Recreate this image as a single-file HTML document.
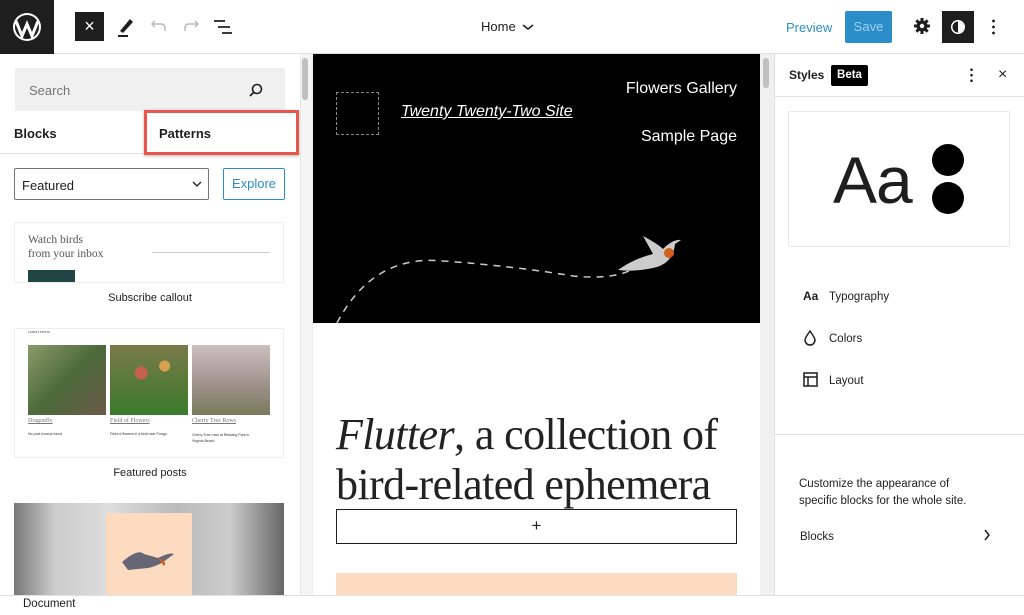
<!DOCTYPE html>
<html><head><meta charset="utf-8"><style>
*{box-sizing:border-box;margin:0;padding:0}
body{width:1024px;height:615px;overflow:hidden;background:#fff;font-family:"Liberation Sans",sans-serif;color:#1e1e1e;position:relative}
.abs{position:absolute}
</style></head><body>
<!-- top bar -->
<div class="abs" style="left:0;top:0;width:1024px;height:54px;border-bottom:1px solid #e0e0e0;background:#fff"></div>
<div class="abs" style="left:0;top:0;width:54px;height:54px;background:#1e1e1e">
<svg width="54" height="54" viewBox="0 0 54 54"><circle cx="27" cy="27" r="14" fill="#fff"/><circle cx="27" cy="27" r="12" fill="#1e1e1e"/><path d="M16 21 L22 36 L27 24 L32 36 L38 21" stroke="#fff" stroke-width="3" fill="none"/></svg></div>
<div class="abs" style="left:75px;top:12px;width:29px;height:29px;background:#1e1e1e;color:#fff;font-size:18px;text-align:center;line-height:28px">×</div>
<svg class="abs" style="left:116px;top:16px" width="20" height="22"><path d="M4 15 L14 3 L17 6 L7 17 Z" fill="#1e1e1e"/><rect x="2" y="19" width="10" height="2" fill="#1e1e1e"/></svg>
<svg class="abs" style="left:150px;top:18px" width="18" height="16"><path d="M5 3 L2 6 L5 9 M2 6 H11 Q15 6 15 10 V13" stroke="#bbb" stroke-width="1.5" fill="none"/></svg>
<svg class="abs" style="left:182px;top:18px" width="18" height="16"><path d="M13 3 L16 6 L13 9 M16 6 H7 Q3 6 3 10 V13" stroke="#bbb" stroke-width="1.5" fill="none"/></svg>
<svg class="abs" style="left:213px;top:18px" width="20" height="18"><path d="M1 3 H12 M5 9 H17 M9 15 H19" stroke="#1e1e1e" stroke-width="1.8"/></svg>
<div class="abs" style="left:481px;top:19px;font-size:13px">Home</div>
<svg class="abs" style="left:522px;top:23px" width="12" height="8"><path d="M1 2 L6 6 L11 2" stroke="#1e1e1e" stroke-width="1.5" fill="none"/></svg>
<div class="abs" style="left:786px;top:20px;font-size:13px;color:#2c8ec8">Preview</div>
<div class="abs" style="left:845px;top:11px;width:47px;height:32px;background:#2c8ec8;color:#9fd0ee;font-size:13px;text-align:center;line-height:32px;border-radius:2px">Save</div>
<svg class="abs" style="left:912px;top:16px" width="20" height="20" viewBox="0 0 20 20"><g fill="#1e1e1e"><rect x="8.5" y="2" width="3" height="16"/><rect x="8.5" y="2" width="3" height="16" transform="rotate(45 10 10)"/><rect x="8.5" y="2" width="3" height="16" transform="rotate(90 10 10)"/><rect x="8.5" y="2" width="3" height="16" transform="rotate(135 10 10)"/><circle cx="10" cy="10" r="5.5"/></g><circle cx="10" cy="10" r="2.2" fill="#fff"/></svg>
<div class="abs" style="left:942px;top:11px;width:32px;height:32px;background:#1e1e1e"><svg width="32" height="32"><circle cx="16" cy="16" r="7" fill="#fff"/><circle cx="16" cy="16" r="5.5" fill="#1e1e1e"/><path d="M16 10.5 A5.5 5.5 0 0 1 16 21.5 Z" fill="#fff"/></svg></div>
<div class="abs" style="left:992px;top:18px;width:3px;height:18px;background:radial-gradient(circle,#1e1e1e 1.3px,transparent 1.5px) 0 0/3px 6px"></div>

<!-- left panel -->
<div class="abs" style="left:15px;top:68px;width:270px;height:43px;background:#f0f0f0"></div>
<div class="abs" style="left:29px;top:83px;font-size:13px;color:#757575">Search</div>
<svg class="abs" style="left:248px;top:82px" width="16" height="16"><circle cx="9" cy="7" r="4.5" stroke="#1e1e1e" stroke-width="1.6" fill="none"/><path d="M6 10 L2 14" stroke="#1e1e1e" stroke-width="1.8"/></svg>
<div class="abs" style="left:0;top:153px;width:300px;height:1px;background:#e0e0e0"></div>
<div class="abs" style="left:14px;top:126px;font-size:13px;font-weight:bold">Blocks</div>
<div class="abs" style="left:144px;top:110px;width:155px;height:45px;border:3px solid #e8574c;box-shadow:0 1px 3px rgba(0,0,0,.3)"></div>
<div class="abs" style="left:159px;top:126px;font-size:13px;font-weight:bold">Patterns</div>
<div class="abs" style="left:14px;top:168px;width:195px;height:32px;border:1px solid #757575;border-radius:2px"></div>
<div class="abs" style="left:22px;top:178px;font-size:13px">Featured</div>
<svg class="abs" style="left:192px;top:181px" width="10" height="7"><path d="M1 1 L5 5 L9 1" stroke="#1e1e1e" stroke-width="1.3" fill="none"/></svg>
<div class="abs" style="left:223px;top:168px;width:62px;height:32px;border:1px solid #2c8ec8;border-radius:2px;color:#2c8ec8;font-size:13px;text-align:center;line-height:30px">Explore</div>
<div class="abs" style="left:14px;top:222px;width:270px;height:61px;border:1px solid #eee"></div>
<div class="abs" style="left:28px;top:233px;font-family:'Liberation Serif',serif;font-size:11.5px;color:#555;line-height:14px">Watch birds<br>from your inbox</div>
<div class="abs" style="left:152px;top:252px;width:118px;height:1px;background:#ccc"></div>
<div class="abs" style="left:28px;top:270px;width:47px;height:12px;background:#204543"></div>
<div class="abs" style="left:0;top:292px;width:300px;text-align:center;font-size:11px">Subscribe callout</div>
<div class="abs" style="left:14px;top:328px;width:270px;height:130px;border:1px solid #eee"></div>
<div class="abs" style="left:28px;top:330px;font-size:3px;color:#333">LATEST POSTS</div>
<div class="abs" style="left:28px;top:345px;width:78px;height:70px;background:linear-gradient(135deg,#8a9a6a,#4c6a3a 50%,#6a5a4a)"></div>
<div class="abs" style="left:110px;top:345px;width:78px;height:70px;background:radial-gradient(circle at 40% 40%,#c86050 0 6px,transparent 7px),radial-gradient(circle at 70% 30%,#d8a050 0 5px,transparent 6px),linear-gradient(#7a7a4a,#3a7a2a)"></div>
<div class="abs" style="left:192px;top:345px;width:78px;height:70px;background:linear-gradient(#ccc0c0,#9a9088 60%,#7a7a5a)"></div>
<div class="abs" style="left:28px;top:418px;font-family:'Liberation Serif',serif;font-size:6px;color:#777;text-decoration:underline">Dragonfly</div>
<div class="abs" style="left:110px;top:418px;font-family:'Liberation Serif',serif;font-size:6px;color:#777;text-decoration:underline">Field of Flowers</div>
<div class="abs" style="left:192px;top:418px;font-family:'Liberation Serif',serif;font-size:6px;color:#777;text-decoration:underline">Cherry Tree Rows</div>
<div class="abs" style="left:28px;top:432px;font-size:3.5px;color:#333">No post excerpt found</div>
<div class="abs" style="left:110px;top:432px;font-size:3.5px;color:#333">Field of flowers in a field near Pungo.</div>
<div class="abs" style="left:192px;top:432px;font-size:3.5px;color:#333;line-height:6px">Cherry Tree rows at Redwing Park in<br>Virginia Beach</div>
<div class="abs" style="left:0;top:467px;width:300px;text-align:center;font-size:11px">Featured posts</div>
<div class="abs" style="left:14px;top:503px;width:270px;height:92px;background:linear-gradient(90deg,#777,#ccc 15%,#ddd 35%,#bbb 60%,#ccc 80%,#666)"></div>
<div class="abs" style="left:106px;top:513px;width:86px;height:82px;background:#fddbc0"></div>
<svg class="abs" style="left:118px;top:540px" width="62" height="40"><path d="M4 22 Q20 8 26 14 L40 18 Q52 12 56 14 L48 20 Q40 26 30 28 L10 30 Z" fill="#667"/><path d="M40 18 Q50 22 46 26" fill="#d06020"/></svg>
<div class="abs" style="left:300px;top:54px;width:12px;height:541px;background:#f5f5f5;border-left:1px solid #e8e8e8"></div>
<div class="abs" style="left:302px;top:58px;width:6px;height:42px;background:#c0c0c0;border-radius:3px"></div>

<!-- canvas -->
<div class="abs" style="left:312px;top:54px;width:462px;height:541px;background:#f0f0f0"></div>
<div class="abs" style="left:313px;top:54px;width:447px;height:541px;background:#fff"></div>
<div class="abs" style="left:313px;top:54px;width:447px;height:269px;background:#000"></div>
<div class="abs" style="left:336px;top:92px;width:43px;height:43px;border:1px dashed #888"></div>
<div class="abs" style="left:401px;top:103px;color:#fff;font-style:italic;font-size:16px;text-decoration:underline">Twenty Twenty-Two Site</div>
<div class="abs" style="left:560px;top:80px;width:177px;text-align:right;color:#fff;font-size:16px">Flowers Gallery</div>
<div class="abs" style="left:560px;top:128px;width:177px;text-align:right;color:#fff;font-size:16px">Sample Page</div>
<svg class="abs" style="left:313px;top:54px" width="447" height="269"><path d="M24 269 Q60 200 130 207 Q200 212 260 222 Q300 226 320 215" stroke="#ccc" stroke-width="1.5" stroke-dasharray="7 6" fill="none"/><path d="M305 216 Q320 205 340 200 L330 182 Q345 190 350 195 Q360 185 368 186 L362 190 Q360 210 340 214 Q320 218 305 216Z" fill="#ccc"/><circle cx="356" cy="199" r="5" fill="#d0601a"/></svg>
<div class="abs" style="left:336px;top:410px;font-family:'Liberation Serif',serif;font-size:44px;line-height:50px;color:#222;white-space:nowrap;letter-spacing:-0.6px"><i>Flutter</i>, a collection of<br>bird-related ephemera</div>
<div class="abs" style="left:336px;top:509px;width:401px;height:35px;border:1px solid #1e1e1e;text-align:center;font-size:17px;line-height:32px;background:#fff">+</div>
<div class="abs" style="left:336px;top:573px;width:401px;height:22px;background:#fddbc0"></div>
<div class="abs" style="left:763px;top:58px;width:6px;height:30px;background:#c0c0c0;border-radius:3px"></div>

<!-- right panel -->
<div class="abs" style="left:774px;top:54px;width:250px;height:541px;background:#fff;border-left:1px solid #e0e0e0"></div>
<div class="abs" style="left:775px;top:96px;width:249px;height:1px;background:#e0e0e0"></div>
<div class="abs" style="left:789px;top:68px;font-size:12px;font-weight:bold">Styles</div>
<div class="abs" style="left:831px;top:65px;width:37px;height:21px;background:#000;color:#fff;font-size:11.5px;font-weight:bold;text-align:center;line-height:21px;border-radius:2px">Beta</div>
<div class="abs" style="left:970px;top:67px;width:3px;height:16px;background:radial-gradient(circle,#1e1e1e 1.2px,transparent 1.4px) 0 0/3px 5.5px"></div>
<div class="abs" style="left:998px;top:66px;font-size:16px">×</div>
<div class="abs" style="left:788px;top:111px;width:222px;height:136px;border:1px solid #e8e8e8;border-radius:2px"></div>
<div class="abs" style="left:833px;top:140px;font-size:66px;line-height:80px;letter-spacing:-1px">Aa</div>
<div class="abs" style="left:932px;top:144px;width:32px;height:32px;border-radius:50%;background:#000"></div>
<div class="abs" style="left:932px;top:182px;width:32px;height:32px;border-radius:50%;background:#000"></div>
<div class="abs" style="left:803px;top:289px;font-size:12px;font-weight:bold">Aa</div>
<div class="abs" style="left:829px;top:291px;font-size:11.5px">Typography</div>
<svg class="abs" style="left:803px;top:329px" width="14" height="18"><path d="M7 2 Q2 9 2 11 A5 5 0 0 0 12 11 Q12 9 7 2Z" stroke="#1e1e1e" stroke-width="1.5" fill="none"/></svg>
<div class="abs" style="left:829px;top:333px;font-size:11.5px">Colors</div>
<svg class="abs" style="left:803px;top:372px" width="16" height="16"><rect x="1" y="1" width="13" height="13" stroke="#1e1e1e" stroke-width="1.5" fill="none"/><path d="M1 5 H14 M5 5 V14" stroke="#1e1e1e" stroke-width="1.5"/></svg>
<div class="abs" style="left:829px;top:375px;font-size:11.5px">Layout</div>
<div class="abs" style="left:775px;top:434px;width:249px;height:1px;background:#e0e0e0"></div>
<div class="abs" style="left:799px;top:476px;font-size:11.5px;line-height:17px">Customize the appearance of<br>specific blocks for the whole site.</div>
<div class="abs" style="left:800px;top:531px;font-size:11.5px">Blocks</div>
<svg class="abs" style="left:982px;top:528px" width="10" height="14"><path d="M3 2 L7 7 L3 12" stroke="#1e1e1e" stroke-width="1.5" fill="none"/></svg>

<!-- footer -->
<div class="abs" style="left:0;top:595px;width:1024px;height:20px;background:#fff;border-top:1px solid #e0e0e0"></div>
<div class="abs" style="left:23px;top:598px;font-size:11.5px">Document</div>
</body></html>
